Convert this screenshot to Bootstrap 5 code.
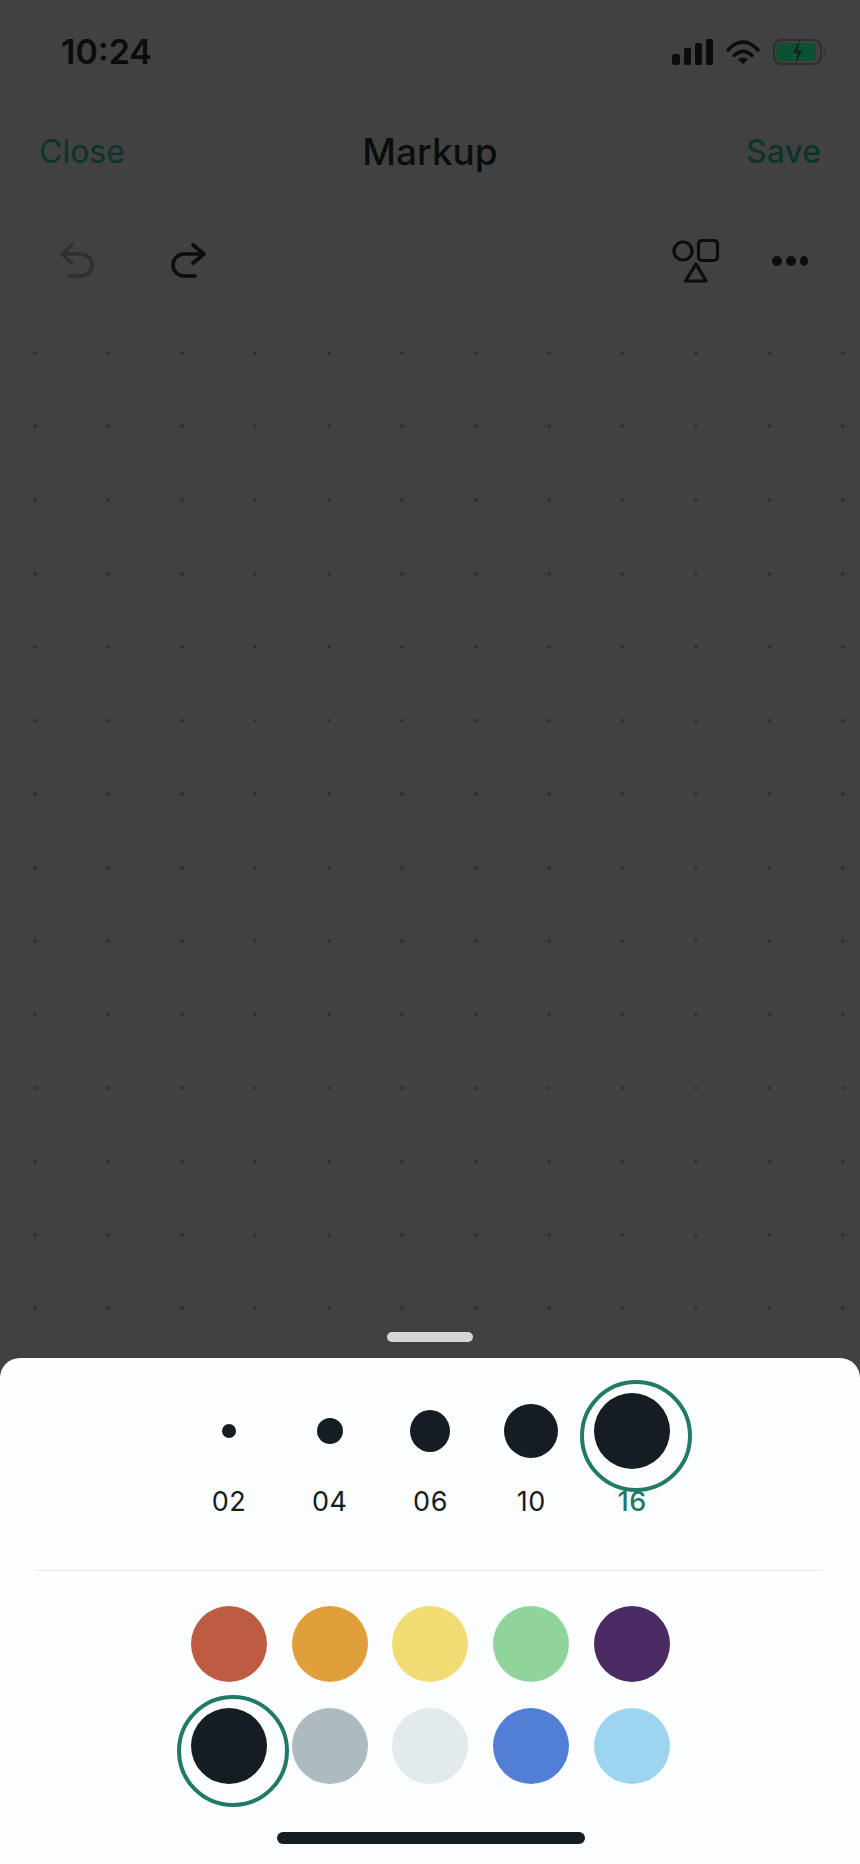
<!DOCTYPE html>
<html lang="en">
<head>
    <meta charset="UTF-8">
    <meta name="viewport" content="width=device-width, initial-scale=1.0">
    <title>Markup</title>
    <link href="https://cdn.jsdelivr.net/npm/bootstrap@5.3.0/dist/css/bootstrap.min.css" rel="stylesheet">
    <style>
        body {
            width: 860px;
            height: 1864px;
            background-color: #414141;
            font-family: Inter, "Liberation Sans", sans-serif;
            color: #0a0d0e;
            overflow: hidden;
        }
        .status-row { height: 104px; padding: 0 34px 0 61px; }
        .status-time { font-size: 34px; font-weight: 600; line-height: 1; margin-top: -1px; }
        .status-icons { gap: 13px; }
        .nav-row {
            height: 96px;
            padding: 0 39px 0 39px;
            display: grid;
            grid-template-columns: 1fr auto 1fr;
            align-items: center;
            font-size: 32px;
            line-height: 40px;
        }
        .nav-action { color: #0c342b; }
        .nav-action-strong { font-weight: 500; }
        .nav-title { font-weight: 500; font-size: 37px; }
        .tool-row { height: 120px; padding: 2px 50px 0 57px; }
        .tool-group-left { gap: 71px; }
        .tool-group-right { gap: 50px; }
        .dot-canvas {
            height: 1038px;
            padding-bottom: 16px;
            background-image: radial-gradient(circle, #2d2d2d 1.3px, transparent 2.1px);
            background-size: 73.45px 73.5px;
            background-position: -1.7px -3.75px;
        }
        .sheet-handle { width: 86px; height: 10px; background-color: #d6d6d6; border-radius: 5px; }
        .sheet {
            height: 506px;
            padding: 35px 0 0 1px;
            background-color: #fcfdfe;
            border-radius: 20px 20px 0 0;
            color: #141d21;
        }
        .picker-grid {
            width: 504px;
            display: grid;
            grid-template-columns: repeat(5, 1fr);
        }
        .size-cell { height: 76px; }
        .size-dot { background-color: #141d21; border-radius: 50%; }
        .size-02 { width: 14px; height: 14px; }
        .size-04 { width: 26px; height: 26px; }
        .size-06 { width: 40px; height: 42px; }
        .size-10 { width: 54px; height: 54px; }
        .size-16 { width: 76px; height: 76px; }
        .size-label {
            margin-top: 19px;
            font-size: 27px;
            line-height: 28px;
            letter-spacing: .5px;
        }
        .size-active { color: #1f7a68; font-weight: 500; }
        .pick-ring {
            position: absolute;
            left: 50%;
            top: 50%;
            width: 112px;
            height: 112px;
            margin: -51.5px 0 0 -52px;
            border: 4px solid #1f7a68;
            border-radius: 50%;
        }
        .sheet-rule { width: 786px; height: 1px; margin: 54px 0 35px 35px; background-color: #e6eaec; }
        .swatch-grid { row-gap: 26px; }
        .swatch { width: 76px; height: 76px; border-radius: 50%; }
        .c-red { background-color: #bd5b43; }
        .c-orange { background-color: #e09f3b; }
        .c-yellow { background-color: #f0dc72; }
        .c-green { background-color: #91d49b; }
        .c-purple { background-color: #4b2b63; }
        .c-ink { background-color: #141d21; }
        .c-grey { background-color: #adbac0; }
        .c-mist { background-color: #e3eaec; }
        .c-blue { background-color: #507fd5; }
        .c-sky { background-color: #9dd5f0; }
        .home-bar { width: 308px; height: 12px; margin-top: 48px; background-color: #141d21; border-radius: 6px; }
    </style>
</head>
<body class="m-0">
    <!-- Status bar -->
    <div class="status-row d-flex justify-content-between align-items-center">
        <div class="status-time">10:24</div>
        <div class="status-icons d-flex align-items-center">
            <svg width="41" height="26" viewBox="0 0 41 26" fill="#0a0d0e">
                <rect x="0" y="15" width="8" height="11" rx="2.5"/>
                <rect x="12" y="9" width="7" height="17" rx="2"/>
                <rect x="23" y="4" width="7" height="22" rx="2"/>
                <rect x="34" y="0" width="7" height="26" rx="2"/>
            </svg>
            <svg width="34" height="24" viewBox="0 0 34 24">
                <path d="M2 10Q17-6 32 10" fill="none" stroke="#0a0d0e" stroke-width="3.4" stroke-linecap="round"/>
                <path d="M8 15.5Q17 7 26 15.5" fill="none" stroke="#0a0d0e" stroke-width="3.4" stroke-linecap="round"/>
                <path d="M12 19.5L17 24L22 19.5Q17 15.5 12 19.5Z" fill="#0a0d0e"/>
            </svg>
            <svg width="53" height="26" viewBox="0 0 53 26">
                <rect x="1" y="1" width="47" height="24" rx="7" fill="none" stroke="#2d2d2d" stroke-width="2"/>
                <rect x="3.5" y="4" width="39" height="18" rx="4" fill="#0d5230"/>
                <path d="M50.5 8.5a4 5 0 0 1 0 9z" fill="#333"/>
                <path d="M27 0L20 14H24.5L22 26L29 11H25Z" fill="#14241b"/>
            </svg>
        </div>
    </div>

    <!-- Title bar -->
    <div class="nav-row">
        <div class="nav-action">Close</div>
        <div class="nav-title">Markup</div>
        <div class="nav-action nav-action-strong text-end">Save</div>
    </div>

    <!-- Tools -->
    <div class="tool-row d-flex justify-content-between align-items-center">
        <div class="tool-group-left d-flex align-items-center">
            <svg width="40" height="40" viewBox="0 0 40 40" fill="none" stroke="#303030" stroke-width="3.6" stroke-linecap="round" stroke-linejoin="round">
                <path d="M15 4L5 13L15 22M5 13H24A11 11 0 0 1 24 35H13"/>
            </svg>
            <svg width="40" height="40" viewBox="0 0 40 40" fill="none" stroke="#0a0d0e" stroke-width="3.6" stroke-linecap="round" stroke-linejoin="round">
                <path d="M25 4L36 13L25 22M36 13H16A11 11 0 0 0 16 35H27"/>
            </svg>
        </div>
        <div class="tool-group-right d-flex align-items-center">
            <svg width="50" height="46" viewBox="0 0 50 46" fill="none" stroke="#0a0d0e" stroke-width="3.2" stroke-linejoin="round">
                <circle cx="13" cy="13" r="9"/>
                <rect x="28.5" y="2.5" width="19" height="20" rx="3.5"/>
                <path d="M26 26L36 43H15.5Z"/>
            </svg>
            <svg width="40" height="12" viewBox="0 0 40 12" fill="#0a0d0e">
                <circle cx="7" cy="6" r="5"/>
                <circle cx="21" cy="6" r="5"/>
                <ellipse cx="34" cy="6" rx="4" ry="5"/>
            </svg>
        </div>
    </div>

    <!-- Canvas behind the sheet -->
    <div class="dot-canvas d-flex flex-column justify-content-end align-items-center">
        <div class="sheet-handle"></div>
    </div>

    <!-- Bottom sheet -->
    <div class="sheet">
        <div class="picker-grid mx-auto text-center">
            <div>
                <div class="size-cell d-flex justify-content-center align-items-center"><div class="size-dot size-02"></div></div>
                <div class="size-label">02</div>
            </div>
            <div>
                <div class="size-cell d-flex justify-content-center align-items-center"><div class="size-dot size-04"></div></div>
                <div class="size-label">04</div>
            </div>
            <div>
                <div class="size-cell d-flex justify-content-center align-items-center"><div class="size-dot size-06"></div></div>
                <div class="size-label">06</div>
            </div>
            <div>
                <div class="size-cell d-flex justify-content-center align-items-center"><div class="size-dot size-10"></div></div>
                <div class="size-label">10</div>
            </div>
            <div>
                <div class="size-cell position-relative d-flex justify-content-center align-items-center">
                    <div class="size-dot size-16"></div>
                    <div class="pick-ring"></div>
                </div>
                <div class="size-label size-active">16</div>
            </div>
        </div>

        <div class="sheet-rule"></div>

        <div class="picker-grid swatch-grid mx-auto">
            <div class="d-flex justify-content-center"><div class="swatch c-red"></div></div>
            <div class="d-flex justify-content-center"><div class="swatch c-orange"></div></div>
            <div class="d-flex justify-content-center"><div class="swatch c-yellow"></div></div>
            <div class="d-flex justify-content-center"><div class="swatch c-green"></div></div>
            <div class="d-flex justify-content-center"><div class="swatch c-purple"></div></div>
            <div class="position-relative d-flex justify-content-center">
                <div class="swatch c-ink"></div>
                <div class="pick-ring"></div>
            </div>
            <div class="d-flex justify-content-center"><div class="swatch c-grey"></div></div>
            <div class="d-flex justify-content-center"><div class="swatch c-mist"></div></div>
            <div class="d-flex justify-content-center"><div class="swatch c-blue"></div></div>
            <div class="d-flex justify-content-center"><div class="swatch c-sky"></div></div>
        </div>

        <div class="home-bar mx-auto"></div>
    </div>

    <script src="https://cdn.jsdelivr.net/npm/bootstrap@5.3.0/dist/js/bootstrap.bundle.min.js"></script>
</body>
</html>
